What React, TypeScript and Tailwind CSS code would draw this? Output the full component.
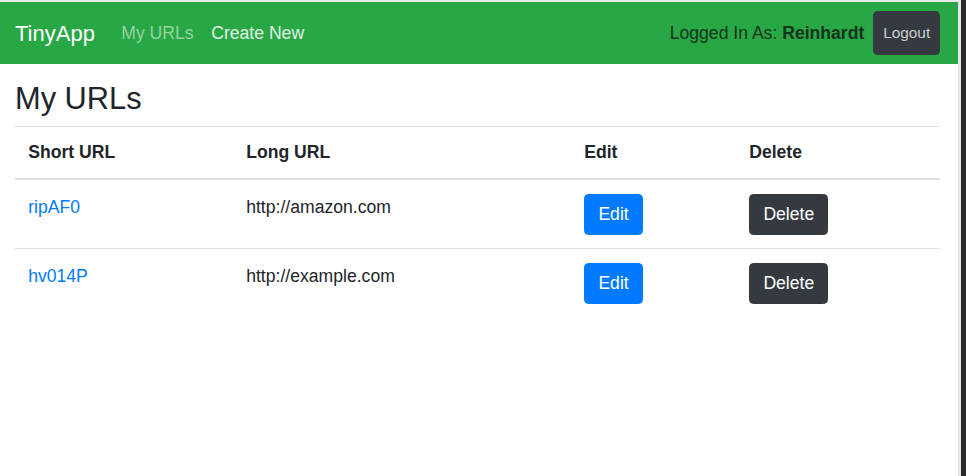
import React from 'react';

interface UrlRow {
    id: string;
    longUrl: string;
}

const urls: UrlRow[] = [
    { id: 'ripAF0', longUrl: 'http://amazon.com' },
    { id: 'hv014P', longUrl: 'http://example.com' },
];

const Navbar: React.FC = () => (
    <nav className="flex h-[62px] items-stretch bg-[#28a745] py-[8.8px] pl-[15px] pr-[18px]">
        <div className="flex items-center text-[22px] text-white">TinyApp</div>
        <div className="ml-[17.6px] flex items-center text-[17.6px]">
            <a href="#" className="px-[8.8px] text-white/50">My URLs</a>
            <a href="#" className="px-[8.8px] text-white/85">Create New</a>
        </div>
        <div className="ml-auto flex items-stretch">
            <span className="mr-[9px] flex items-center text-[17.6px] text-[#15341b]">
                Logged In As:&nbsp;<b className="font-bold">Reinhardt</b>
            </span>
            <button className="rounded-[4.4px] border border-[#343a40] bg-[#343a40] px-[8.8px] text-[15.4px] text-[#c9cbcd]">
                Logout
            </button>
        </div>
    </nav>
);

export default function App() {
    return (
        <div className="flex h-[476px] w-[966px] overflow-hidden bg-white font-['Liberation_Sans',Arial,sans-serif] text-[#212529]">
            <div className="flex w-[958px] flex-col">
                <div className="h-[2px] bg-[#e8e8e8]" />
                <Navbar />
                <main className="pl-[15px] pr-[18px]">
                    <h3 className="mb-[8px] mt-[17px] text-[30.8px] font-normal leading-[1.2]">My URLs</h3>
                    <table className="w-full table-fixed border-collapse text-left text-[17.6px] leading-[26.4px]">
                        <colgroup>
                            <col className="w-[218px]" />
                            <col className="w-[338px]" />
                            <col className="w-[165px]" />
                            <col className="w-[204px]" />
                        </colgroup>
                        <thead>
                            <tr>
                                <th className="border-b-2 border-t border-[#dee2e6] px-[13.2px] py-[12.5px] font-bold">Short URL</th>
                                <th className="border-b-2 border-t border-[#dee2e6] px-[13.2px] py-[12.5px] font-bold">Long URL</th>
                                <th className="border-b-2 border-t border-[#dee2e6] px-[13.2px] py-[12.5px] font-bold">Edit</th>
                                <th className="border-b-2 border-t border-[#dee2e6] px-[13.2px] py-[12.5px] font-bold">Delete</th>
                            </tr>
                        </thead>
                        <tbody>
                            {urls.map((u) => (
                                <tr key={u.id}>
                                    <td className="border-t border-[#dee2e6] p-[13.2px] align-top">
                                        <a href="#" className="text-[#007bff]">{u.id}</a>
                                    </td>
                                    <td className="border-t border-[#dee2e6] p-[13.2px] align-top">{u.longUrl}</td>
                                    <td className="border-t border-[#dee2e6] p-[13.2px] align-top">
                                        <button className="rounded-[4.4px] border border-[#007bff] bg-[#007bff] px-[13.2px] py-[6.6px] leading-[26.4px] text-white">
                                            Edit
                                        </button>
                                    </td>
                                    <td className="border-t border-[#dee2e6] p-[13.2px] align-top">
                                        <button className="rounded-[4.4px] border border-[#343a40] bg-[#343a40] px-[13.2px] py-[6.6px] leading-[26.4px] text-white">
                                            Delete
                                        </button>
                                    </td>
                                </tr>
                            ))}
                        </tbody>
                    </table>
                </main>
            </div>
            <div className="w-[3px] bg-[#e6e6e6]" />
            <div className="flex-1 bg-[#2b2b2b]" />
        </div>
    );
}
